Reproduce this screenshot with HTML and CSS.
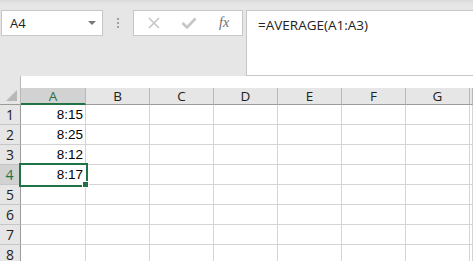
FILE: index.html
```html
<!DOCTYPE html>
<html>
<head>
  <title>Book1 - Excel</title>
  <link rel="stylesheet" href="styles.css">
</head>
<body>
  <div class="formula-bar">
    <div class="name-box">
      <span>A4</span>
      <span class="caret"></span>
    </div>
    <div class="grip"><i></i><i></i><i></i></div>
    <div class="fx-buttons">
      <svg class="btn-icon" width="14" height="14" viewBox="0 0 14 14">
        <path d="M2 2 L12 12 M12 2 L2 12" stroke="#c6c6c6" stroke-width="1.6" fill="none"/>
      </svg>
      <svg class="btn-icon" width="16" height="14" viewBox="0 0 16 14">
        <path d="M1.5 7 L6 11.5 L14.5 2.5" stroke="#c6c6c6" stroke-width="2.6" fill="none"/>
      </svg>
      <span class="fx">fx</span>
    </div>
    <div class="formula-input">=AVERAGE(A1:A3)</div>
  </div>

  <div class="sheet">
    <div class="corner"><span class="tri"></span></div>
    <div class="col-head active">A</div>
    <div class="col-head">B</div>
    <div class="col-head">C</div>
    <div class="col-head">D</div>
    <div class="col-head">E</div>
    <div class="col-head">F</div>
    <div class="col-head">G</div>
    <div class="col-head"></div>

    <div class="row-head">1</div>
    <div class="cell num">8:15</div><div class="cell"></div><div class="cell"></div><div class="cell"></div><div class="cell"></div><div class="cell"></div><div class="cell"></div><div class="cell"></div>

    <div class="row-head">2</div>
    <div class="cell num">8:25</div><div class="cell"></div><div class="cell"></div><div class="cell"></div><div class="cell"></div><div class="cell"></div><div class="cell"></div><div class="cell"></div>

    <div class="row-head">3</div>
    <div class="cell num">8:12</div><div class="cell"></div><div class="cell"></div><div class="cell"></div><div class="cell"></div><div class="cell"></div><div class="cell"></div><div class="cell"></div>

    <div class="row-head active">4</div>
    <div class="cell num selected">8:17<span class="handle"></span></div><div class="cell"></div><div class="cell"></div><div class="cell"></div><div class="cell"></div><div class="cell"></div><div class="cell"></div><div class="cell"></div>

    <div class="row-head">5</div>
    <div class="cell"></div><div class="cell"></div><div class="cell"></div><div class="cell"></div><div class="cell"></div><div class="cell"></div><div class="cell"></div><div class="cell"></div>

    <div class="row-head">6</div>
    <div class="cell"></div><div class="cell"></div><div class="cell"></div><div class="cell"></div><div class="cell"></div><div class="cell"></div><div class="cell"></div><div class="cell"></div>

    <div class="row-head">7</div>
    <div class="cell"></div><div class="cell"></div><div class="cell"></div><div class="cell"></div><div class="cell"></div><div class="cell"></div><div class="cell"></div><div class="cell"></div>

    <div class="row-head">8</div>
    <div class="cell"></div><div class="cell"></div><div class="cell"></div><div class="cell"></div><div class="cell"></div><div class="cell"></div><div class="cell"></div><div class="cell"></div>
  </div>
</body>
</html>
```

FILE: styles.css
```css
body {
  margin: 0;
  background-color: #e6e6e6;
  font-family: "Open Sans", "Noto Sans", sans-serif;
  overflow: hidden;
}

.formula-bar {
  display: flex;
  align-items: flex-start;
  padding: 10px 0 0 1px;
  height: 76px;
  box-sizing: border-box;
  background: linear-gradient(#d9d9d9, #e6e6e6 4px);
}

.name-box {
  display: flex;
  align-items: center;
  justify-content: space-between;
  width: 102px;
  height: 26px;
  box-sizing: border-box;
  padding: 0 6px 0 8px;
  background-color: #fff;
  border: 1px solid #c6c6c6;
  font-size: 13px;
  color: #222;
}

.caret {
  width: 0;
  height: 0;
  border-left: 4px solid transparent;
  border-right: 4px solid transparent;
  border-top: 4px solid #777;
}

.grip {
  display: flex;
  flex-direction: column;
  gap: 2px;
  width: 30px;
  align-items: center;
  padding-top: 8px;
}

.grip i {
  width: 2px;
  height: 2px;
  background-color: #9f9f9f;
}

.fx-buttons {
  display: flex;
  align-items: center;
  width: 110px;
  height: 26px;
  box-sizing: border-box;
  border: 1px solid #c6c6c6;
  background-color: #fff;
  padding-left: 13px;
  gap: 20px;
}

.fx {
  font-family: "Liberation Serif", serif;
  font-style: italic;
  font-size: 14px;
  color: #6e6e6e;
  margin-left: 2px;
}

.formula-input {
  flex: 1;
  margin-left: 3px;
  height: 66px;
  box-sizing: border-box;
  background-color: #fff;
  border: 1px solid #c6c6c6;
  border-right: none;
  padding: 5px 0 0 11px;
  font-size: 13.5px;
  color: #222;
}

.sheet {
  display: grid;
  grid-template-columns: 21px 65px 64px 64px 64px 64px 64px 64px 1fr;
  grid-template-rows: 29px repeat(8, 20px);
  background-color: #fff;
}

.corner {
  position: relative;
  background-color: #e6e6e6;
  border-right: 1px solid #b8b8b8;
  border-bottom: 1px solid #9b9b9b;
}

.tri {
  position: absolute;
  right: 3px;
  bottom: 3px;
  width: 0;
  height: 0;
  border-left: 11px solid transparent;
  border-bottom: 11px solid #b8b8b8;
}

.col-head {
  display: flex;
  align-items: center;
  justify-content: center;
  margin-top: 12px;
  background-color: #e6e6e6;
  border-right: 1px solid #b8b8b8;
  border-bottom: 1px solid #9b9b9b;
  font-size: 13.5px;
  color: #222;
}

.col-head.active {
  background-color: #d2d2d2;
  color: #217346;
  border-bottom: 2px solid #217346;
}

.row-head {
  display: flex;
  align-items: center;
  justify-content: center;
  background-color: #e6e6e6;
  border-right: 1px solid #9b9b9b;
  border-bottom: 1px solid #c6c6c6;
  font-size: 14px;
  color: #222;
}

.row-head.active {
  background-color: #d2d2d2;
  color: #217346;
  border-right: 2px solid #217346;
}

.cell {
  position: relative;
  border-right: 1px solid #d4d4d4;
  border-bottom: 1px solid #d4d4d4;
  font-family: "Liberation Sans", Arial, sans-serif;
  font-size: 13.5px;
  color: #000;
  line-height: 19px;
}

.cell.num {
  text-align: right;
  padding-right: 2px;
}

.cell.selected {
  box-shadow: 0 0 0 2px #217346;
  border-color: transparent;
  z-index: 1;
}

.handle {
  position: absolute;
  right: -4px;
  bottom: -4px;
  width: 5px;
  height: 5px;
  background-color: #217346;
  border: 1px solid #fff;
}
```
